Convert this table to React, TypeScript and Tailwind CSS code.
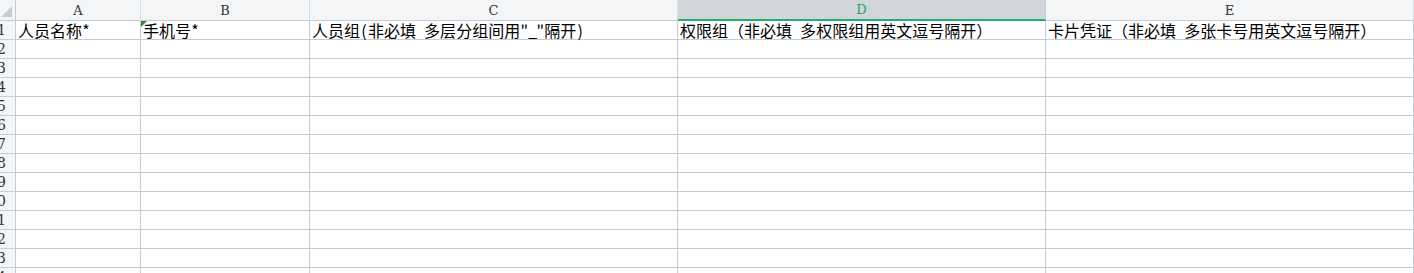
import React from "react";

const cols = [
  { key: "A", width: "w-[125px]", title: "人员名称*" },
  { key: "B", width: "w-[169px]", title: "手机号*", flag: true },
  { key: "C", width: "w-[368px]", title: '人员组(非必填 多层分组间用"_"隔开)' },
  { key: "D", width: "w-[368px]", title: "权限组（非必填 多权限组用英文逗号隔开）", active: true },
  { key: "E", width: "w-[368px]", title: "卡片凭证（非必填 多张卡号用英文逗号隔开）" },
];

const rows = Array.from({ length: 14 }, (_, i) => i + 1);

const cellFont = { fontFamily: '"Noto Sans CJK SC", "Noto Sans", sans-serif' };
const headFont = { fontFamily: '"DejaVu Serif", "Liberation Serif", serif' };

// half-width characters sit in a fixed half-em box, like the sheet's SimSun cells
const CellText = ({ text }: { text: string }) => (
  <>
    {Array.from(text).map((ch, i) =>
      ch.charCodeAt(0) < 128 ? (
        <span key={i} className="inline-block w-[8px] text-center whitespace-pre">
          {ch}
        </span>
      ) : (
        <span key={i}>{ch}</span>
      )
    )}
  </>
);

const Sheet = () => {
  return (
    <div className="w-[1414px] h-[273px] overflow-hidden bg-white select-none">
      {/* column letters */}
      <div className="flex h-[21px]">
        <div className="relative w-[16px] shrink-0 bg-[#f4f5f7] border-r border-b border-[#c6cbd8] overflow-hidden">
          <div className="absolute right-[3px] bottom-[3px] w-0 h-0 border-l-[11px] border-l-transparent border-b-[11px] border-b-[#c9ccd2]" />
        </div>
        {cols.map((c) => (
          <div
            key={c.key}
            className={`${c.width} shrink-0 flex items-center justify-center text-[13px] leading-none ${
              c.active
                ? "bg-[#d2d5dc] text-[#1fa463] border-r border-[#c6cbd8] border-b-2 border-b-[#21b06c]"
                : "bg-[#f4f5f7] text-[#333] border-r border-b border-[#d7dbe3] border-b-[#c6cbd8]"
            }`}
            style={headFont}
          >
            {c.key}
          </div>
        ))}
      </div>

      {/* body rows */}
      {rows.map((r) => (
        <div key={r} className="flex h-[19px]">
          <div
            className="w-[16px] shrink-0 bg-[#f4f5f7] border-r border-b border-[#c6cbd8] overflow-hidden flex items-center justify-end pr-[9px] text-[14px] leading-none text-[#333]"
            style={headFont}
          >
            <span className="whitespace-nowrap">{r}</span>
          </div>
          {cols.map((c) => (
            <div
              key={c.key}
              className={`${c.width} shrink-0 relative border-r border-b border-[#c6cbd8] flex items-center pl-[2px] text-[16px] leading-none text-black whitespace-nowrap`}
              style={cellFont}
            >
              {r === 1 && c.flag && (
                <div className="absolute left-0 top-0 w-0 h-0 border-t-[6px] border-t-[#2a8a3c] border-r-[6px] border-r-transparent" />
              )}
              {r === 1 ? <CellText text={c.title} /> : null}
            </div>
          ))}
        </div>
      ))}
    </div>
  );
};

export default function App() {
  return <Sheet />;
}
